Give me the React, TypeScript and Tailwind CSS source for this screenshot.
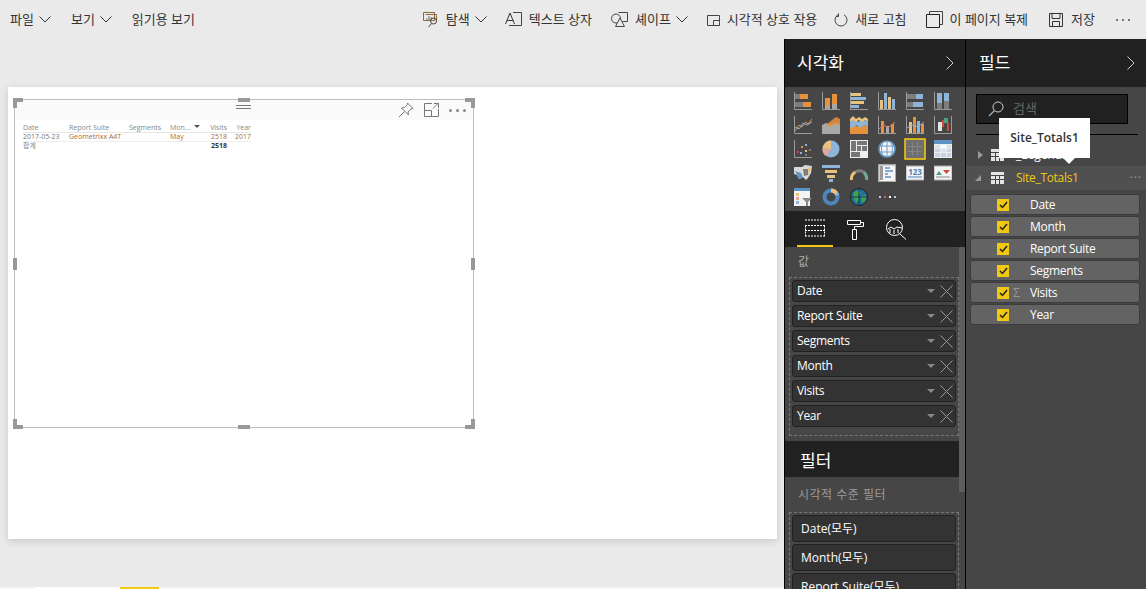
import React from "react";

const FONT = "font-['Open_Sans','Noto_Sans_CJK_KR',sans-serif]";
const OR = "#e8913c";
const BL = "#8fb4d9";
const TN = "#e9c27e";
const GR = "#a8a8a8";
const DG = "#7d7d7d";
const AX = "#9a9a9a";

// small helper for the chart icons
function Bars({ items }: { items: [number, number, number, number, string][] }) {
  return (
    <>
      {items.map(([x, y, w, h, c], i) => (
        <rect key={i} x={x} y={y} width={w} height={h} fill={c} />
      ))}
    </>
  );
}

const Axis = () => <path d="M0.5 0v17.5H18" fill="none" stroke={AX} />;

function line(d: string, c: string) {
  return <path d={d} fill="none" stroke={c} strokeWidth="1" />;
}

const vizIcons: React.ReactNode[] = [
  <><Axis /><Bars items={[[1, 2, 5, 5, DG], [6, 2, 8, 5, OR], [1, 10, 8, 5, DG], [9, 10, 8, 5, OR]]} /></>,
  <><Axis /><Bars items={[[3, 6, 5, 8, OR], [3, 14, 5, 3, GR], [10, 2, 5, 10, OR], [10, 12, 5, 5, GR]]} /></>,
  <><Axis /><Bars items={[[1, 1, 10, 3, TN], [1, 5, 15, 3, BL], [1, 9, 13, 3, TN], [1, 13, 8, 3, BL]]} /></>,
  <><Axis /><Bars items={[[2, 8, 3, 9, TN], [6, 1, 3, 16, BL], [10, 5, 3, 12, TN], [14, 7, 3, 10, BL]]} /></>,
  <><Axis /><Bars items={[[1, 2, 9, 5, DG], [10, 2, 7, 5, BL], [1, 10, 6, 5, DG], [7, 10, 10, 5, BL]]} /></>,
  <><Axis /><Bars items={[[3, 1, 5, 10, BL], [3, 11, 5, 6, DG], [10, 1, 5, 8, BL], [10, 9, 5, 8, DG]]} /></>,
  <><Axis />{line("M1 15 5 9 8 11 12 6 14 8 18 3", OR)}{line("M1 11 5 13 9 7 13 9 18 6", BL)}</>,
  <><path d="M0 18V9l4-2 5 2 4-3 5 2v10z" fill={GR} /><path d="M4 9l6-5 4-3 4 2v6l-5-1-5 3z" fill={OR} opacity=".85" /></>,
  <><path d="M0 18V11l4-3 4 3 4-3 6 3v7z" fill={OR} /><path d="M0 11V6l4-3 4 3 4-3 6 3v5l-4-2-4 3-4-3-4 3z" fill={BL} /><path d="M0 6V3l3-3 3 3 3-2 3 2 3-2 3 2v3l-3-2-3 2-3-2-3 2-3-2z" fill={TN} /></>,
  <><Axis /><Bars items={[[3, 5, 3, 12, OR], [8, 10, 3, 7, GR], [13, 8, 3, 9, OR]]} />{line("M1 13 6 9 10 12 17 6", "#e07a60")}</>,
  <><Axis /><Bars items={[[3, 6, 3, 11, TN], [7, 1, 3, 16, OR], [11, 5, 3, 12, BL], [15, 8, 3, 9, OR]]} />{line("M1 12 6 9 12 11 18 6", BL)}</>,
  <><path d="M0.5 0v17.5H18M17.5 0v18" fill="none" stroke={AX} /><Bars items={[[4, 6, 4, 9, "#e3e3e3"], [8, 4, 2, 7, "#c94f3d"], [10, 2, 4, 5, "#4ea37c"], [13, 7, 2, 8, "#c94f3d"]]} /></>,
  <><Axis /><Bars items={[[3, 11, 2, 2, "#c94f3d"], [7, 6, 2, 2, OR], [11, 4, 2, 2, BL], [6, 12, 2, 2, BL], [11, 10, 2, 2, TN], [15, 9, 2, 2, DG], [11, 14, 2, 2, DG]]} /></>,
  <><circle cx="9" cy="9" r="8.5" fill={BL} /><path d="M9 9V.5A8.5 8.5 0 0 0 .6 8z" fill={TN} /><path d="M9 9 .6 8A8.5 8.5 0 0 0 4 16z" fill="#e2a99a" /></>,
  <><rect width="18" height="18" fill="#eee" /><Bars items={[[1, 1, 5, 10, "#767676"], [7, 1, 10, 4, "#767676"], [7, 6, 4, 5, "#767676"], [12, 6, 5, 5, "#767676"], [1, 12, 9, 5, "#767676"]]} /></>,
  <><circle cx="9" cy="9" r="8" fill="#f4f4f4" stroke="#5f93c4" strokeWidth="1.6" /><path d="M1 6h16M1 12h16M9 1v16M5 2c-2 5-2 9 0 14M13 2c2 5 2 9 0 14" fill="none" stroke="#6f9dc8" /></>,
  <><rect x="1" y="1" width="20" height="20" fill="#6f6f6f" stroke="#f2c811" strokeWidth="1.6" /><path d="M4 8.500h14M4 13.500h14M8.500 4v14M13.500 4v14" stroke="#858585" /></>,
  <><rect width="18" height="18" fill="#eee" /><rect width="18" height="4" fill="#5f93c4" /><Bars items={[[1, 5, 5, 3, "#d9e3ee"], [7, 5, 5, 3, "#fff"], [13, 5, 4, 3, "#d9e3ee"], [1, 9, 5, 3, "#c6d5e5"], [7, 9, 5, 3, "#d9e3ee"], [13, 9, 4, 3, "#c6d5e5"], [1, 13, 5, 4, "#c6d5e5"], [7, 13, 5, 4, "#c6d5e5"], [13, 13, 4, 4, "#c6d5e5"]]} /></>,
  <><path d="M0 3h8l3-2 7 1-1 7-3 5-2 2-3-3-4 2-2-4-3-1z" fill="#d9d9d9" /><path d="M1 7l6 2 2 5-4 1-2-4z" fill="#5f93c4" /><path d="M9 5h6l-1 6-4 1z" fill="#7d7d7d" /><path d="M14 4l3-1-1 5-2 2z" fill={TN} /></>,
  <><Bars items={[[0, 1, 18, 3, BL], [3, 6, 12, 3, TN], [5, 11, 8, 3, TN], [7, 15, 4, 3, BL]]} /></>,
  <><path d="M1.500 16a8 8 0 0 1 4-8" fill="none" stroke={TN} strokeWidth="3" /><path d="M5.500 8a8 8 0 0 1 8 0" fill="none" stroke={DG} strokeWidth="3" /><path d="M13.500 8a8 8 0 0 1 3 8" fill="none" stroke="#6fae8f" strokeWidth="3" /></>,
  <><rect x=".75" y=".75" width="17" height="17" fill="#f5f5f5" stroke="#aaa" strokeWidth="1.5" /><rect x="2" y="2" width="3" height="14" fill="#9a9a9a" /><path d="M7 4h5M7 7h8M7 10h3M7 13h6" stroke="#5f93c4" strokeWidth="1.4" /></>,
  <><rect y="2" width="18" height="14" fill="#f5f5f5" stroke="#aaa" /><text x="9" y="11" textAnchor="middle" fontSize="8" fontWeight="700" fill="#4a80b4" fontFamily="Open Sans">123</text><path d="M2 13h14" stroke="#4a80b4" /></>,
  <><rect y="2" width="18" height="14" fill="#f5f5f5" stroke="#aaa" /><path d="M2 11l3-4 3 4z" fill="#4ea37c" /><path d="M9 6h7l-3.500 4z" fill="#c94f3d" /><path d="M2 13h14" stroke="#888" /></>,
  <><rect width="16" height="18" fill="#f3f3f3" /><rect width="16" height="3" fill="#5f93c4" /><Bars items={[[2, 5, 3, 3, TN], [2, 9, 3, 3, "#e2a99a"], [2, 13, 3, 3, BL]]} /><path d="M8 10h10l-4 4v4h-2v-4z" fill="#8a8a8a" /></>,
  <><circle cx="9" cy="9" r="6.500" fill="none" stroke="#4f86bb" strokeWidth="4" /><path d="M9 2.500a6.500 6.500 0 0 1 5.500 3" fill="none" stroke={TN} strokeWidth="4" /><path d="M14.500 5.500a6.500 6.500 0 0 1 .8 2" fill="none" stroke="#8fb4d9" strokeWidth="4" /></>,
  <><circle cx="9" cy="9" r="8.500" fill="#1f6f9f" stroke="#222" /><path d="M3 5l5-3 3 3-3 3 1 4-3 3-2-5zM11 8l5-1 0 5-4 3z" fill="#3fa34d" /><path d="M1 9h16M9 1v16" stroke="#123" strokeWidth=".7" /></>,
];

const fieldNames = ["Date", "Report Suite", "Segments", "Month", "Visits", "Year"];
const tableFields = ["Date", "Month", "Report Suite", "Segments", "Visits", "Year"];

function Chevron({ className = "" }: { className?: string }) {
  return (
    <svg width="12" height="7" viewBox="0 0 12 7" className={className}>
      <path d="M.5.5 6 6l5.500-5.500" fill="none" stroke="#333" />
    </svg>
  );
}

function ToolItem({ icon, label, chevron, ml }: { icon?: React.ReactNode; label: string; chevron?: boolean; ml: string }) {
  return (
    <div className={`flex items-center ${ml}`}>
      {icon}
      <span className="whitespace-nowrap">{label}</span>
      {chevron && <Chevron className="ml-[5px]" />}
    </div>
  );
}

function Toolbar() {
  const ic = "none";
  const s = "#444";
  return (
    <div className="flex h-[39px] items-center pl-[10px] pr-[16px] text-[13px] text-[#333]">
      <ToolItem label="파일" chevron ml="" />
      <ToolItem label="보기" chevron ml="ml-[20px]" />
      <ToolItem label="읽기용 보기" ml="ml-[20px]" />
      <div className="ml-auto flex items-center">
        <ToolItem
          label="탐색"
          chevron
          ml=""
          icon={
            <svg width="17" height="17" viewBox="0 0 17 17" className="mr-[7px]">
              <path d="M1.500 1.500h11v8h-11zM3.500 3.500h11v6" fill={ic} stroke="#8a6a3a" />
              <path d="M5 9V7M7 9V5M9 9V6" stroke="#777" />
              <circle cx="11.500" cy="10" r="3" fill={ic} stroke={s} />
              <path d="M9.500 12.500 6.500 16" stroke={s} />
            </svg>
          }
        />
        <ToolItem
          label="텍스트 상자"
          ml="ml-[18px]"
          icon={
            <svg width="17" height="15" viewBox="0 0 17 15" className="mr-[7px]">
              <path d="M8 .5h8.500v13H4" fill={ic} stroke={s} />
              <path d="M.5 12 5 1l4.500 11M2 8.500h6" fill={ic} stroke="#333" />
            </svg>
          }
        />
        <ToolItem
          label="셰이프"
          chevron
          ml="ml-[19px]"
          icon={
            <svg width="17" height="15" viewBox="0 0 17 15" className="mr-[7px]">
              <circle cx="5" cy="6.500" r="4.500" fill={ic} stroke={s} />
              <path d="M7.500.5h9v9h-5" fill={ic} stroke={s} />
              <path d="M9 6l4.500 8.500h-9z" fill="#eaeaea" stroke={s} />
            </svg>
          }
        />
        <ToolItem
          label="시각적 상호 작용"
          ml="ml-[19px]"
          icon={
            <svg width="13" height="12" viewBox="0 0 13 12" className="mr-[7px]">
              <path d="M.5 1.500h12v10H.5zM6.500 11.500v-5h6" fill={ic} stroke={s} />
            </svg>
          }
        />
        <ToolItem
          label="새로 고침"
          ml="ml-[17px]"
          icon={
            <svg width="14" height="14" viewBox="0 0 14 14" className="mr-[7px]">
              <path d="M4 1.800A6 6 0 1 0 10 1.800" fill={ic} stroke={s} />
              <path d="M3 .5v3h-2.500" fill={ic} stroke={s} transform="translate(1.500 0)" />
            </svg>
          }
        />
        <ToolItem
          label="이 페이지 복제"
          ml="ml-[19px]"
          icon={
            <svg width="17" height="17" viewBox="0 0 17 17" className="mr-[7px]">
              <path d="M3.500 3.500v-3h13v13h-3" fill={ic} stroke={s} />
              <path d="M.5 3.500h13v13H.5z" fill={ic} stroke="#222" />
            </svg>
          }
        />
        <ToolItem
          label="저장"
          ml="ml-[21px]"
          icon={
            <svg width="14" height="14" viewBox="0 0 14 14" className="mr-[8px]">
              <path d="M.5.500h13v13H.5zM3 .5v5h8v-5M3.500 13.500v-5h7v5" fill={ic} stroke="#333" />
            </svg>
          }
        />
        <div className="ml-[21px] flex gap-[4px]">
          <i className="h-[2px] w-[2px] bg-[#777]" />
          <i className="h-[2px] w-[2px] bg-[#777]" />
          <i className="h-[2px] w-[2px] bg-[#777]" />
        </div>
      </div>
    </div>
  );
}

function ReportTable() {
  const headers = [
    ["Date", "w-[46px]"],
    ["Report Suite", "w-[60px]"],
    ["Segments", "w-[41px]"],
    ["Mon...", "w-[30px]"],
    ["Visits", "w-[27px] text-right"],
    ["Year", "w-[24px] text-right"],
  ];
  return (
    <div className="w-fit px-[8px] pt-[4px] font-['Open_Sans','Noto_Sans_CJK_KR',sans-serif] text-[7px] leading-[8px] text-[#888]">
      <div className="relative flex border-b border-[#e6e6e6]">
        {headers.map(([h, w]) => (
          <span key={h} className={`${w} shrink-0 overflow-hidden whitespace-nowrap`}>{h}</span>
        ))}
        <i className="absolute left-[171px] top-[1px] h-0 w-0 border-x-[3px] border-t-[3px] border-x-transparent border-t-[#555]" />
      </div>
      <div className="flex border-b border-[#eee] text-[#777]">
        <span className="w-[46px] shrink-0 whitespace-nowrap">2017-05-23</span>
        <span className="w-[60px] shrink-0 whitespace-nowrap text-[#a86d2c]">Geometrixx A4T</span>
        <span className="w-[41px] shrink-0" />
        <span className="w-[30px] shrink-0 text-[#a86d2c]">May</span>
        <span className="w-[27px] shrink-0 text-right text-[#a86d2c]">2518</span>
        <span className="w-[24px] shrink-0 text-right text-[#a86d2c]">2017</span>
      </div>
      <div className="flex">
        <span className="w-[177px] shrink-0">합계</span>
        <span className="w-[27px] shrink-0 text-right font-bold text-[#333]">2518</span>
      </div>
    </div>
  );
}

function Handle({ className }: { className: string }) {
  return <div className={`absolute bg-[#999] ${className}`} />;
}

function Visual() {
  return (
    <div className="absolute left-[6px] top-[12px] h-[329px] w-[460px] border border-[#bdbdbd] bg-white">
      <div className="flex h-[20px] items-center justify-end bg-[#fafafa] pr-[7px]">
        <div className="absolute left-[221px] top-[5px] h-[4px] w-[15px] border-y border-[#777]" />
        <svg width="16" height="16" viewBox="0 0 16 16" className="mr-[10px]">
          <path d="M9.500 1 15 6.500l-2 .5-3 3 .5 3-7-7 3-.5 3-3zM6.500 9.500 1 15" fill="none" stroke="#777" />
        </svg>
        <svg width="15" height="14" viewBox="0 0 15 14" className="mr-[10px]">
          <path d="M8 .5H.5v13h14V6M.5 7.500h7v6M9 5.500l5-5M10 .5h4.500V5" fill="none" stroke="#777" />
        </svg>
        <div className="flex gap-[4px]">
          <i className="h-[3px] w-[3px] rounded-full bg-[#888]" />
          <i className="h-[3px] w-[3px] rounded-full bg-[#888]" />
          <i className="h-[3px] w-[3px] rounded-full bg-[#888]" />
        </div>
      </div>
      <ReportTable />
      <Handle className="-left-[2px] -top-[2px] h-[10px] w-[10px] [clip-path:polygon(0_0,100%_0,100%_40%,40%_40%,40%_100%,0_100%)]" />
      <Handle className="-right-[2px] -top-[2px] h-[10px] w-[10px] [clip-path:polygon(0_0,100%_0,100%_100%,60%_100%,60%_40%,0_40%)]" />
      <Handle className="-left-[2px] -bottom-[2px] h-[10px] w-[10px] [clip-path:polygon(0_0,40%_0,40%_60%,100%_60%,100%_100%,0_100%)]" />
      <Handle className="-right-[2px] -bottom-[2px] h-[10px] w-[10px] [clip-path:polygon(60%_0,100%_0,100%_100%,0_100%,0_60%,60%_60%)]" />
      <Handle className="left-[223px] -top-[2px] h-[4px] w-[12px]" />
      <Handle className="left-[223px] -bottom-[2px] h-[4px] w-[12px]" />
      <Handle className="-left-[2px] top-[158px] h-[12px] w-[4px]" />
      <Handle className="-right-[2px] top-[158px] h-[12px] w-[4px]" />
    </div>
  );
}

function VizPanel() {
  return (
    <div className="relative flex h-full w-[182px] shrink-0 flex-col overflow-hidden border-x border-black bg-[#464646]">
      <div className="flex h-[48px] shrink-0 items-center justify-between bg-[#212121] pl-[12px] pr-[11px] text-[17px] text-white">
        <span>시각화</span>
        <svg width="8" height="14" viewBox="0 0 8 14"><path d="M.5.5 7 7 .500 13.500" fill="none" stroke="#ccc" /></svg>
      </div>
      <div className="grid h-[124px] shrink-0 grid-cols-[repeat(6,18px)] content-start gap-x-[10px] gap-y-[6px] pl-[9px] pt-[5px]">
        {vizIcons.map((icon, i) =>
          i === 16 ? (
            <svg key={i} width="22" height="22" viewBox="0 0 22 22" className="-m-[2px]">
              {icon}
            </svg>
          ) : (
            <svg key={i} width="18" height="18" viewBox="0 0 18 18">
              {icon}
            </svg>
          )
        )}
        <div className="flex h-[18px] items-center gap-[3px] pl-[1px]">
          <i className="h-[2px] w-[3px] bg-[#bcd]" /><i className="h-[2px] w-[3px] bg-[#c96a5a]" /><i className="h-[2px] w-[3px] bg-white" /><i className="h-[2px] w-[3px] bg-[#bcd]" />
        </div>
      </div>
      <div className="flex h-[36px] shrink-0 items-center bg-[#212121] pl-[12px]">
        <div className="flex h-full w-[36px] items-center justify-center border-b-2 border-[#f2c811]">
          <svg width="20" height="18" viewBox="0 0 20 18"><path d="M0 1h20M0 6.500h20M0 11.500h20M0 17h20M.5 6.500V17M19.500 6.500V17" stroke="#fff" strokeDasharray="2 1" fill="none" /></svg>
        </div>
        <svg width="18" height="21" viewBox="0 0 18 21" className="ml-[13px]"><path d="M1.500 1.500h13v4h-13zM14.500 3.500h3v4h-9v3M6.500 10.500h4v10h-4z" fill="none" stroke="#fff" /></svg>
        <svg width="22" height="22" viewBox="0 0 22 22" className="ml-[21px]"><circle cx="9.500" cy="9.500" r="8" fill="none" stroke="#fff" /><path d="M3 11l3-2 3 2 3-2 5 1M5 15v-4M9 16v-4M13 15v-4M15 16l6 5.500" fill="none" stroke="#fff" /></svg>
      </div>
      <div className="flex flex-col pl-[4px] pr-[6px] text-[12px] tracking-[-0.3px] text-white">
        <div className="h-[30px] pl-[9px] pt-[6px] text-[12px] text-[#aaa]">값</div>
        <div className="flex flex-col gap-[3px] border border-dashed border-[#777] px-[2px] pb-[8px] pt-[2px]">
          {fieldNames.map((f) => (
            <div key={f} className="flex h-[22px] items-center justify-between rounded-[3px] border border-[#222] bg-[#333] pl-[4px] pr-[2px]">
              <span>{f}</span>
              <span className="flex items-center gap-[5px]">
                <i className="h-0 w-0 border-x-[4px] border-t-[4px] border-x-transparent border-t-[#888]" />
                <svg width="13" height="13" viewBox="0 0 13 13"><path d="M.5.500l12 12M12.500.500l-12 12" stroke="#999" /></svg>
              </span>
            </div>
          ))}
        </div>
      </div>
      <div className="mt-[5px] flex h-[36px] shrink-0 items-center bg-[#212121] pl-[15px] pt-[4px] text-[17px] text-white">필터</div>
      <div className="pl-[4px] pr-[6px] text-[12px] text-white">
        <div className="flex h-[35px] items-center pl-[9px] text-[12px] tracking-[.5px] text-[#9a9a9a]">시각적 수준 필터</div>
        <div className="flex flex-col gap-[2px] border border-dashed border-[#777] px-[2px] pt-[2px]">
          {["Date(모두)", "Month(모두)", "Report Suite(모두)"].map((f) => (
            <div key={f} className="flex h-[27px] shrink-0 items-center rounded-[3px] border border-[#222] bg-[#333] pl-[8px]">{f}</div>
          ))}
        </div>
      </div>
      <div className="absolute right-0 top-[208px] h-[245px] w-[6px] rounded-[1px] bg-[#5e5e5e]" />
    </div>
  );
}

function TableGlyph() {
  return (
    <svg width="13" height="12" viewBox="0 0 13 12" className="shrink-0">
      <rect width="13" height="12" fill="#e4e4e4" />
      <path d="M0 3.500h13M0 7.500h13M4.500 3v9M8.500 3v9" stroke="#464646" />
    </svg>
  );
}

function FieldsPanel() {
  return (
    <div className="relative flex h-full min-w-0 flex-1 flex-col bg-[#464646] text-[12px] text-white">
      <div className="flex h-[48px] shrink-0 items-center justify-between bg-[#212121] pl-[13px] pr-[11px] text-[17px]">
        <span>필드</span>
        <svg width="8" height="14" viewBox="0 0 8 14"><path d="M.5.5 7 7 .500 13.500" fill="none" stroke="#ccc" /></svg>
      </div>
      <div className="ml-[10px] mt-[7px] flex h-[30px] w-[152px] items-center border border-black bg-[#212121] pl-[11px]">
        <svg width="16" height="16" viewBox="0 0 16 16"><circle cx="10" cy="6" r="5" fill="none" stroke="#ccc" /><path d="M6.500 9.500 1 15" stroke="#8fb4d9" strokeWidth="1.300" /></svg>
        <span className="ml-[9px] text-[13px] text-[#666]">검색</span>
      </div>
      <div className="ml-[10px] mr-[8px] mt-[10px] h-px bg-black" />
      <div className="flex h-[31px] items-center pl-[12px] pt-[9px]">
        <i className="mr-[8px] h-0 w-0 border-y-[4px] border-l-[5px] border-y-transparent border-l-[#999]" />
        <TableGlyph />
        <span className="ml-[12px]">_Legends</span>
      </div>
      <div className="flex h-[24px] items-center bg-[#505050] pl-[9px] pr-[4px] tracking-[-0.3px]">
        <i className="mr-[10px] h-0 w-0 border-b-[6px] border-l-[6px] border-b-[#999] border-l-transparent" />
        <TableGlyph />
        <span className="ml-[12px] text-[#f2c811]">Site_Totals1</span>
        <span className="ml-auto tracking-[1px] text-[#999]">···</span>
      </div>
      <div className="mt-[4px] flex flex-col gap-px pl-[4px] pr-[6px] tracking-[-0.3px]">
        {tableFields.map((f) => (
          <div key={f} className="flex h-[21px] items-center rounded-[3px] border border-[#3c3c3c] bg-[#636363]">
            <span className="ml-[26px] flex h-[12px] w-[12px] shrink-0 items-center justify-center bg-[#f2c811]">
              <svg width="9" height="8" viewBox="0 0 9 8"><path d="M1 4l2.500 2.500L8 1" fill="none" stroke="#222" strokeWidth="1.500" /></svg>
            </span>
            <span className="w-[15px] pl-[4px] text-[12px] leading-none text-[#999]">{f === "Visits" ? "Σ" : ""}</span>
            <span className="ml-[6px]">{f}</span>
          </div>
        ))}
      </div>
      <div className="absolute left-[33px] top-[79px] flex h-[40px] w-[91px] items-center justify-center bg-white text-[12px] font-semibold text-[#333]">
        Site_Totals1
        <i className="absolute left-[64px] top-[40px] h-0 w-0 border-x-[6px] border-t-[6px] border-x-transparent border-t-white" />
      </div>
    </div>
  );
}

export default function App() {
  return (
    <div className={`flex h-[589px] w-[1146px] flex-col overflow-hidden bg-[#eaeaea] ${FONT}`}>
      <Toolbar />
      <div className="flex min-h-0 flex-1">
        <div className="relative w-[784px] shrink-0">
          <div className="absolute left-[8px] top-[48px] h-[452px] w-[769px] bg-white shadow-[0_2px_8px_rgba(0,0,0,0.15)]">
            <Visual />
          </div>
          <div className="absolute bottom-0 left-0 flex h-[2px] w-full bg-[#f4f4f4]">
            <div className="ml-[35px] h-full w-[85px] bg-white" />
            <div className="h-full w-[39px] bg-[#f2c811]" />
          </div>
        </div>
        <VizPanel />
        <FieldsPanel />
      </div>
    </div>
  );
}
